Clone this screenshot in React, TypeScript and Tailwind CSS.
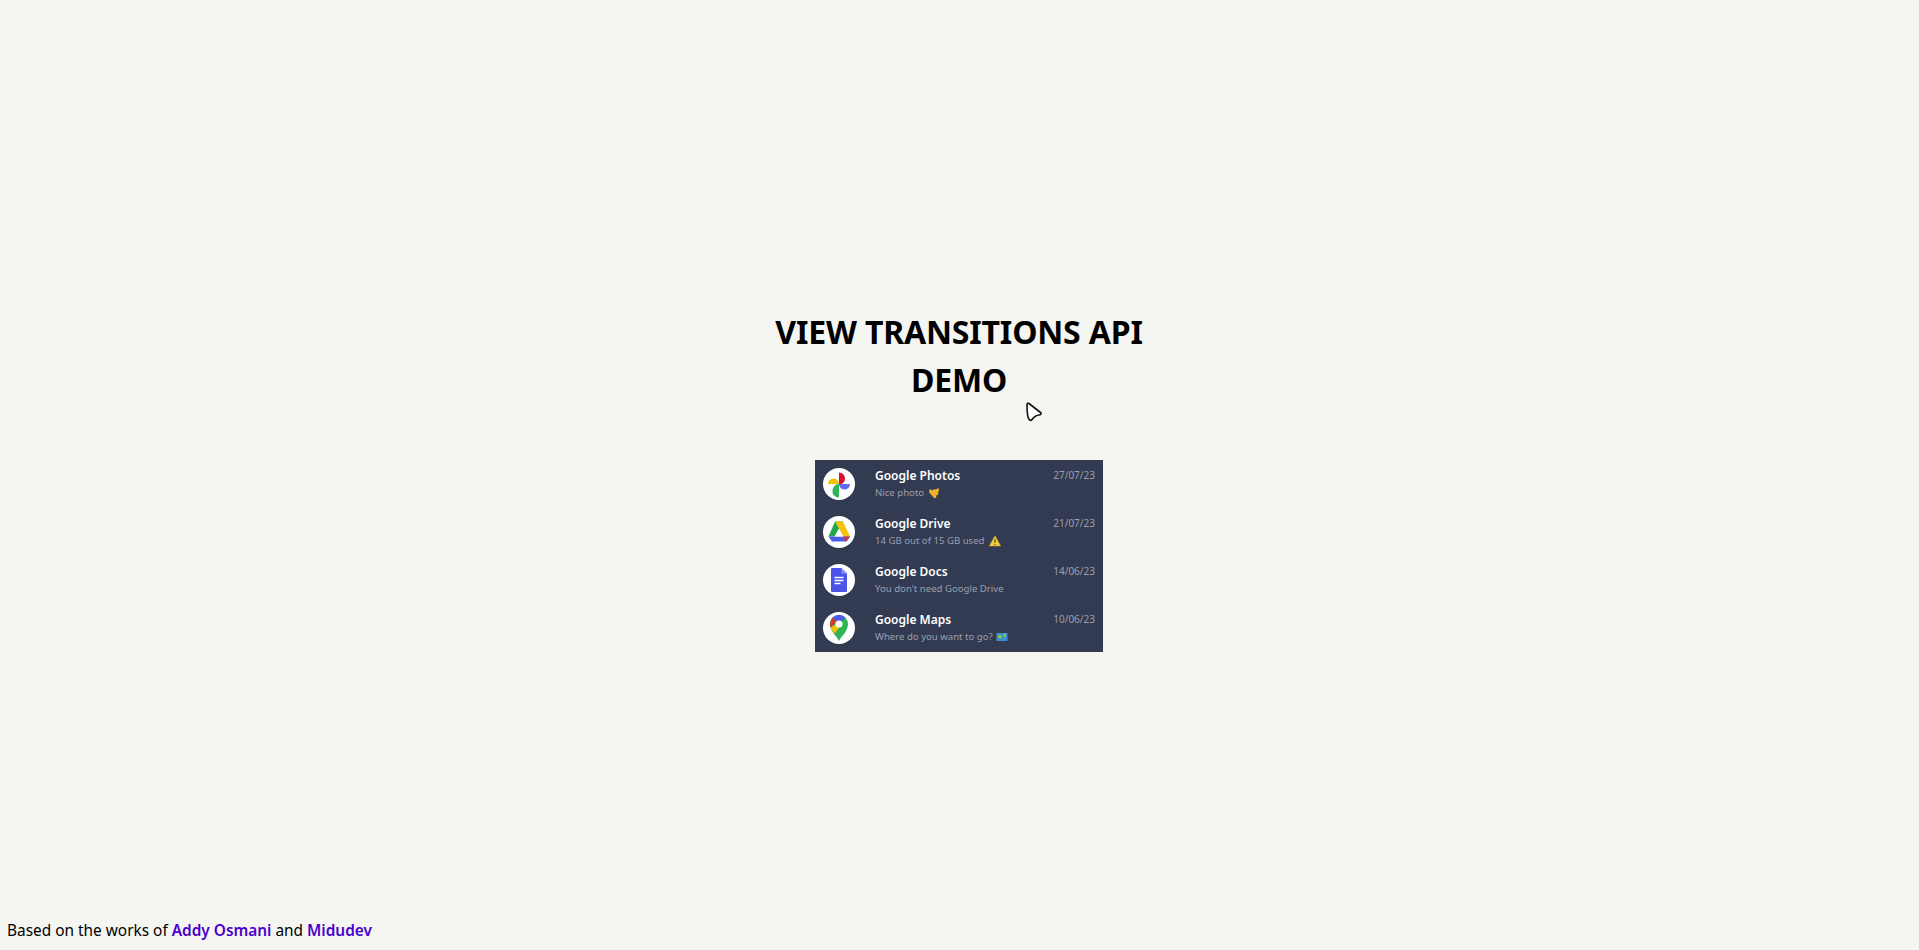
import React from 'react';

const font = { fontFamily: '"Noto Sans", "Open Sans", sans-serif' };

const PhotosIcon = () => (
  <svg viewBox="0 0 32 32" className="w-8 h-8">
    <path d="M16 4.500a6 6 0 0 1 6 6v.500a5.500 5.500 0 0 1-6 5.500z" fill="#d6122f" />
    <path d="M16 16h11a5.500 5.500 0 0 1-5.500 5.500A5.500 5.500 0 0 1 16 16z" fill="#5c6bf0" />
    <path d="M16 16v13.500a6 6 0 0 1-6.500-6.500c0-3.600 2.900-7 6.500-7z" fill="#2fb457" />
    <path d="M16 16H5a5.500 5.500 0 0 1 5.500-5.500c3 0 5.500 2.500 5.500 5.500z" fill="#f4c20d" />
  </svg>
);

const DriveIcon = () => (
  <svg viewBox="0 0 32 32" className="w-8 h-8">
    <path d="M12 5.500h8L11.500 20.500 5.500 20.500z" fill="#1fa84f" />
    <path d="M12 5.500h8l7 15h-7z" fill="#f4c20d" />
    <path d="M5.500 20.500h21.500l-3.500 5h-14.500z" fill="#4a5ee8" />
    <path d="M20 20.500h7l-3.500 5z" fill="#d6362b" />
    <path d="M11.500 20.500l4.500-7.500 4.500 7.500z" fill="#ffffff" />
  </svg>
);

const DocsIcon = () => (
  <svg viewBox="0 0 32 32" className="w-8 h-8">
    <path d="M9 4h9.500L24 9.500V27a1 1 0 0 1-1 1H9a1 1 0 0 1-1-1V5a1 1 0 0 1 1-1z" fill="#4a55e8" />
    <path d="M18.500 4v5.500H24z" fill="#8e96f2" />
    <path d="M11.500 13.500h9M11.500 16.500h9M11.500 19.500h6" stroke="#ffffff" strokeWidth="1.400" />
  </svg>
);

const MapsIcon = () => (
  <svg viewBox="0 0 32 32" className="w-8 h-8">
    <path d="M16 29c-2-5-9-9-9-17a9 9 0 0 1 18 0C25 20 18 24 16 29z" fill="#2fb457" />
    <path d="M9.500 5.500a9 9 0 0 1 13 0L18.500 9.500h-5z" fill="#4a5ee8" />
    <path d="M9.500 5.500A9 9 0 0 0 7 12c0 1.200.2 2.300.6 3.400L13.500 10z" fill="#d6362b" />
    <path d="M7.600 15.400c.8 2.400 2.300 4.300 3.700 6.100L19.500 12h-6z" fill="#f4c20d" />
    <circle cx="16" cy="12" r="3.600" fill="#ffffff" />
  </svg>
);

const HandEmoji = () => (
  <svg viewBox="0 0 12 12" className="inline-block w-3 h-3 ml-1 align-[-3px]">
    <path d="M1 3c1.500-.8 2.500-.6 3.500.5C5.500 2.500 7 2 7.500 2.500L10.500 1l.5 3-1 1 .5 2-2 1.500-.5 2.500L6 11 3 7.500 1.500 6z" fill="#eeb02b" />
  </svg>
);

const WarnEmoji = () => (
  <svg viewBox="0 0 12 12" className="inline-block w-3 h-3 ml-1 align-[-3px]">
    <path d="M6 .8 11.700 11H.3z" fill="#f4d03f" stroke="#c9a227" strokeWidth="0.500" />
    <path d="M6 4v4M6 9v1" stroke="#333333" strokeWidth="1" />
  </svg>
);

const MapEmoji = () => (
  <svg viewBox="0 0 12 12" className="inline-block w-3 h-3 ml-[3px] align-[-3px]">
    <rect x="0.500" y="2" width="11" height="8" fill="#3f8fd0" />
    <path d="M2 4h3l1 2-2 2-2-2zM7 3h3v3H8z" fill="#7ec850" />
  </svg>
);

const rows = [
  { name: 'Google Photos', date: '27/07/23', text: 'Nice photo', icon: <PhotosIcon />, emoji: <HandEmoji /> },
  { name: 'Google Drive', date: '21/07/23', text: '14 GB out of 15 GB used', icon: <DriveIcon />, emoji: <WarnEmoji /> },
  { name: 'Google Docs', date: '14/06/23', text: "You don't need Google Drive", icon: <DocsIcon />, emoji: null },
  { name: 'Google Maps', date: '10/06/23', text: 'Where do you want to go?', icon: <MapsIcon />, emoji: <MapEmoji /> },
];

export default function App() {
  return (
    <div className="relative min-h-screen flex flex-col bg-[#f5f5f1] text-black overflow-hidden" style={font}>
      <main className="flex-1 flex flex-col items-center pt-[308px] pr-px">
        <h1 className="w-[400px] text-center text-[32px] leading-[48px] font-bold uppercase tracking-[-0.17px]">View Transitions API Demo</h1>

        <ul className="mt-[56px] w-[288px] bg-[#333b52]">
          {rows.map(row => (
            <li key={row.name} className="h-12 flex items-start pt-2 pl-2 pr-2">
              <div className="w-8 h-8 rounded-full bg-white shrink-0">{row.icon}</div>
              <div className="ml-5 flex-1 min-w-0">
                <div className="flex justify-between items-center h-[15px]">
                  <span className="text-[12px] leading-[15px] font-semibold text-white">{row.name}</span>
                  <span className="text-[10px] leading-[15px] text-[#9a9fb0]">{row.date}</span>
                </div>
                <p className="mt-[1px] text-[9.6px] leading-[17px] text-[#9a9fb0]">
                  {row.text}
                  {row.emoji}
                </p>
              </div>
            </li>
          ))}
        </ul>
      </main>

      <footer className="h-[40px] pl-[7px] pt-[9px] text-[15.4px] leading-6">
        Based on the works of{' '}
        <a href="#" className="font-semibold text-[#4a00d0]">Addy Osmani</a> and{' '}
        <a href="#" className="font-semibold text-[#4a00d0]">Midudev</a>
      </footer>

      <svg viewBox="0 0 20 24" className="absolute left-[1024px] top-[401px] w-5 h-6">
        <path d="M3 3.500c0-1.200 1-1.600 2-1l11.500 9c1 .8.700 2-.5 2.200-3 .5-6 1.500-8 4.800-.8 1.200-2 1.200-3-.2-1.500-2-2-9-2-14.800z" fill="#ffffff" stroke="#111111" strokeWidth="1.600" strokeLinejoin="round" />
      </svg>
    </div>
  );
}
